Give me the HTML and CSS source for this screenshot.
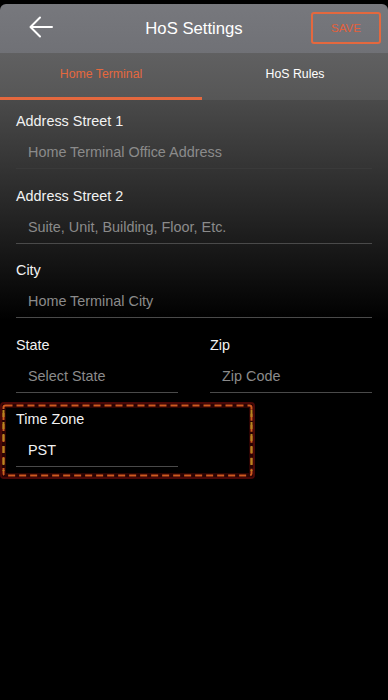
FILE: index.html
```html
<!DOCTYPE html>
<html lang="en">
<head>
<meta charset="utf-8">
<title>HoS Settings</title>
<link rel="stylesheet" href="styles.css">
</head>
<body>
<div class="screen">
  <header class="topbar">
    <div class="bar-left">
      <svg class="back" width="24" height="22" viewBox="0 0 24 22" aria-hidden="true">
        <path d="M23 11 H2 M11 1.5 L1.5 11 L11 20.5" fill="none" stroke="#fff" stroke-width="2" stroke-linecap="round" stroke-linejoin="round"/>
      </svg>
    </div>
    <h1 class="title">HoS Settings</h1>
    <div class="bar-right">
      <button class="save">SAVE</button>
    </div>
  </header>
  <nav class="tabs">
    <div class="tab active">Home Terminal</div>
    <div class="tab">HoS Rules</div>
  </nav>
  <main class="form">
    <div class="field">
      <div class="label">Address Street 1</div>
      <div class="input placeholder faint">Home Terminal Office Address</div>
    </div>
    <div class="field">
      <div class="label">Address Street 2</div>
      <div class="input placeholder">Suite, Unit, Building, Floor, Etc.</div>
    </div>
    <div class="field">
      <div class="label">City</div>
      <div class="input placeholder">Home Terminal City</div>
    </div>
    <div class="row">
      <div class="field">
        <div class="label">State</div>
        <div class="input placeholder">Select State</div>
      </div>
      <div class="field">
        <div class="label">Zip</div>
        <div class="input placeholder">Zip Code</div>
      </div>
    </div>
    <div class="row">
      <div class="field highlighted">
        <svg class="dash" width="255" height="77" viewBox="0 0 255 77" aria-hidden="true">
          <rect x="3.5" y="3.5" width="248" height="70" rx="2" fill="none" stroke="#cf5a1f" stroke-width="2" stroke-dasharray="7 4"/>
          <path d="M3.5 8 V69 M251.5 8 V69" fill="none" stroke="#b8861f" stroke-width="2" stroke-dasharray="7 5"/>
        </svg>
        <div class="label">Time Zone</div>
        <div class="input value">PST</div>
      </div>
    </div>
  </main>
</div>
</body>
</html>
```
FILE: styles.css
```css
*, *::before, *::after { box-sizing: border-box; }
html, body { margin: 0; padding: 0; background: #000; }
body {
  font-family: "Liberation Sans", Arial, sans-serif;
  color: #fff;
  width: 388px;
  height: 700px;
  overflow: hidden;
}
.screen { padding-top: 4px; background: #000; height: 700px; }

.topbar {
  height: 49px;
  background: linear-gradient(#77787d, #707176);
  border-radius: 6px 6px 0 0;
  display: grid;
  grid-template-columns: 1fr auto 1fr;
  align-items: center;
}
.bar-left { padding-left: 29px; display: flex; align-items: center; }
.back { display: block; margin-top: -3px; }
.title {
  margin: 0;
  font-size: 16.7px;
  font-weight: normal;
  color: #fff;
}
.bar-right { display: flex; justify-content: flex-end; padding-right: 7px; }
.save {
  width: 70px;
  height: 32px;
  margin-top: -1px;
  background: transparent;
  border: 2px solid #e4683e;
  border-radius: 3px;
  color: #e3603c;
  font-family: "Liberation Sans", Arial, sans-serif;
  font-size: 11.5px;
  padding: 0;
}

.tabs {
  height: 47px;
  display: grid;
  grid-template-columns: 202px 1fr;
  background: linear-gradient(#606061, #565656);
}
.tab {
  display: flex;
  align-items: center;
  justify-content: center;
  font-size: 12.3px;
  color: #fff;
  padding-bottom: 5px;
}
.tab.active {
  color: #e4683e;
  border-bottom: 3px solid #e4683e;
  padding-bottom: 2px;
}

.form {
  background: linear-gradient(#4a4a4a 0, #262626 110px, #000 220px);
  padding: 11px 16px 0;
  display: flex;
  flex-direction: column;
  gap: 16.5px;
  height: 596px;
}
.field { display: flex; flex-direction: column; }
.label {
  font-size: 14.4px;
  line-height: 20px;
  color: #f2f2f2;
}
.input {
  font-size: 14.4px;
  line-height: 20px;
  padding: 11px 0 6px 12px;
  border-bottom: 1px solid #4a4a4a;
}
.placeholder { color: #8b8b8b; }
.faint { border-bottom-color: #3a3a3a; }
.value { color: #f2f2f2; }

.row {
  display: grid;
  grid-template-columns: 162px 162px;
  column-gap: 32px;
}

.highlighted { position: relative; }
.highlighted::before {
  content: "";
  position: absolute;
  left: -16px;
  top: -7px;
  width: 255px;
  height: 77px;
  border: 2px solid #480707;
  border-radius: 4px;
  box-shadow: inset 0 0 0 4px rgba(60, 4, 4, 0.7);
  pointer-events: none;
}
.dash {
  position: absolute;
  left: -16px;
  top: -7px;
  pointer-events: none;
}
```
